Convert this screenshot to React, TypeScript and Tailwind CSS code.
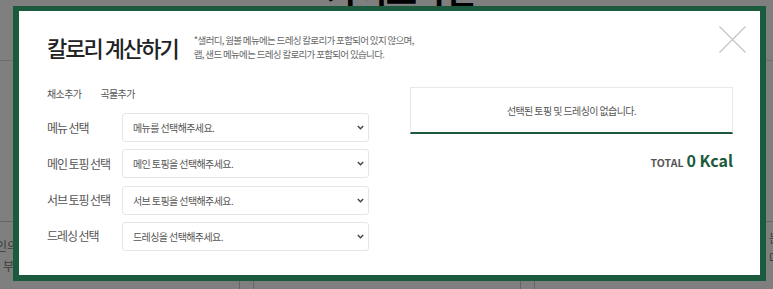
import React from "react";

function Chevron() {
  return (
    <svg width="7" height="5" viewBox="0 0 7 5" className="shrink-0">
      <path d="M0.8 1 L3.5 3.8 L6.2 1" fill="none" stroke="#444" strokeWidth="1.4" />
    </svg>
  );
}

function SelectRow({ label, placeholder }: { label: string; placeholder: string }) {
  return (
    <div className="flex items-center">
      <div className="w-[75px] text-[12px] text-[#555] tracking-[-0.09em]">{label}</div>
      <div className="flex h-[29px] w-[247px] items-center justify-between rounded-[3px] border border-[#e6e6e6] bg-white pl-[10px] pr-[4px]">
        <span className="text-[10px] text-[#555] tracking-[-0.06em]">{placeholder}</span>
        <Chevron />
      </div>
    </div>
  );
}

export default function App() {
  return (
    <div className="relative h-[289px] w-[773px] overflow-hidden bg-white font-['Noto_Sans_CJK_KR','Noto_Sans',sans-serif]">
      {/* page behind the overlay */}
      <div className="flex flex-col">
        <div className="h-[61px] border-b border-[#ddd]">
          <h1 className="mt-[-27px] pl-[28px] text-center text-[34px] font-bold leading-[34px] tracking-[-0.05em] text-black">
            가이드라인
          </h1>
        </div>
        <div className="ml-[-28px] mt-[160px] grid w-[830px] grid-cols-3 gap-[13px]">
          <div className="h-[200px] border border-[#ccc] pr-[221px] pt-[14px] text-right text-[12px] leading-[20px] text-[#777]">
            <p>개인의</p>
            <p className="pr-[4px]">부</p>
          </div>
          <div className="h-[200px] border border-[#ccc]" />
          <div className="h-[200px] border border-[#ccc] pl-[234px] pt-[6px] text-[12px] leading-[20px] text-[#777]">
            <p>는</p>
            <p>다</p>
          </div>
        </div>
      </div>

      {/* dim overlay */}
      <div className="absolute inset-0 bg-black/50" />

      {/* modal */}
      <div className="absolute left-[13px] top-[6px] h-[275px] w-[753px] border-[6px] border-t-[5px] border-[#1b5a3c] bg-white">
        <button className="absolute right-[14px] top-[15px] h-[27px] w-[27px]">
          <svg width="27" height="27" viewBox="0 0 27 27">
            <path d="M0.5 0.5 L26.5 26.5 M26.5 0.5 L0.5 26.5" stroke="#c4c4c4" strokeWidth="1.2" />
          </svg>
        </button>

        <div className="pl-[28px] pr-[27px] pt-[16px]">
          <div className="flex h-[40px] items-center">
            <h2 className="whitespace-nowrap text-[22px] font-medium tracking-[-0.09em] text-[#222]">칼로리 계산하기</h2>
            <div className="ml-[16px] text-[9.5px] leading-[14px] tracking-[-0.07em] text-[#666]">
              <p>*샐러디, 웜볼 메뉴에는 드레싱 칼로리가 포함되어 있지 않으며,</p>
              <p>랩, 샌드 메뉴에는 드레싱 칼로리가 포함되어 있습니다.</p>
            </div>
          </div>

          <div className="mt-[19px] flex gap-[41px]">
            <div className="w-[322px]">
              <div className="flex h-[14px] items-center gap-[19px] text-[10px] tracking-[-0.06em] text-[#555]">
                <span>채소추가</span>
                <span>곡물추가</span>
              </div>
              <div className="mt-[13px] flex flex-col gap-[7.3px]">
                <SelectRow label="메뉴 선택" placeholder="메뉴를 선택해주세요." />
                <SelectRow label="메인 토핑 선택" placeholder="메인 토핑을 선택해주세요." />
                <SelectRow label="서브 토핑 선택" placeholder="서브 토핑을 선택해주세요." />
                <SelectRow label="드레싱 선택" placeholder="드레싱을 선택해주세요." />
              </div>
            </div>

            <div className="mt-[1px] w-[323px]">
              <div className="flex h-[47px] items-center justify-center border border-b-2 border-[#e8e8e8] border-b-[#1b5a3c]">
                <span className="text-[10px] tracking-[-0.06em] text-[#555]">선택된 토핑 및 드레싱이 없습니다.</span>
              </div>
              <div className="mt-[14px] flex items-baseline justify-end gap-[3px]">
                <span className="text-[10.5px] font-bold text-[#555]">TOTAL</span>
                <span className="text-[16px] font-bold text-[#1b5a3c]">0 Kcal</span>
              </div>
            </div>
          </div>
        </div>
      </div>
    </div>
  );
}
